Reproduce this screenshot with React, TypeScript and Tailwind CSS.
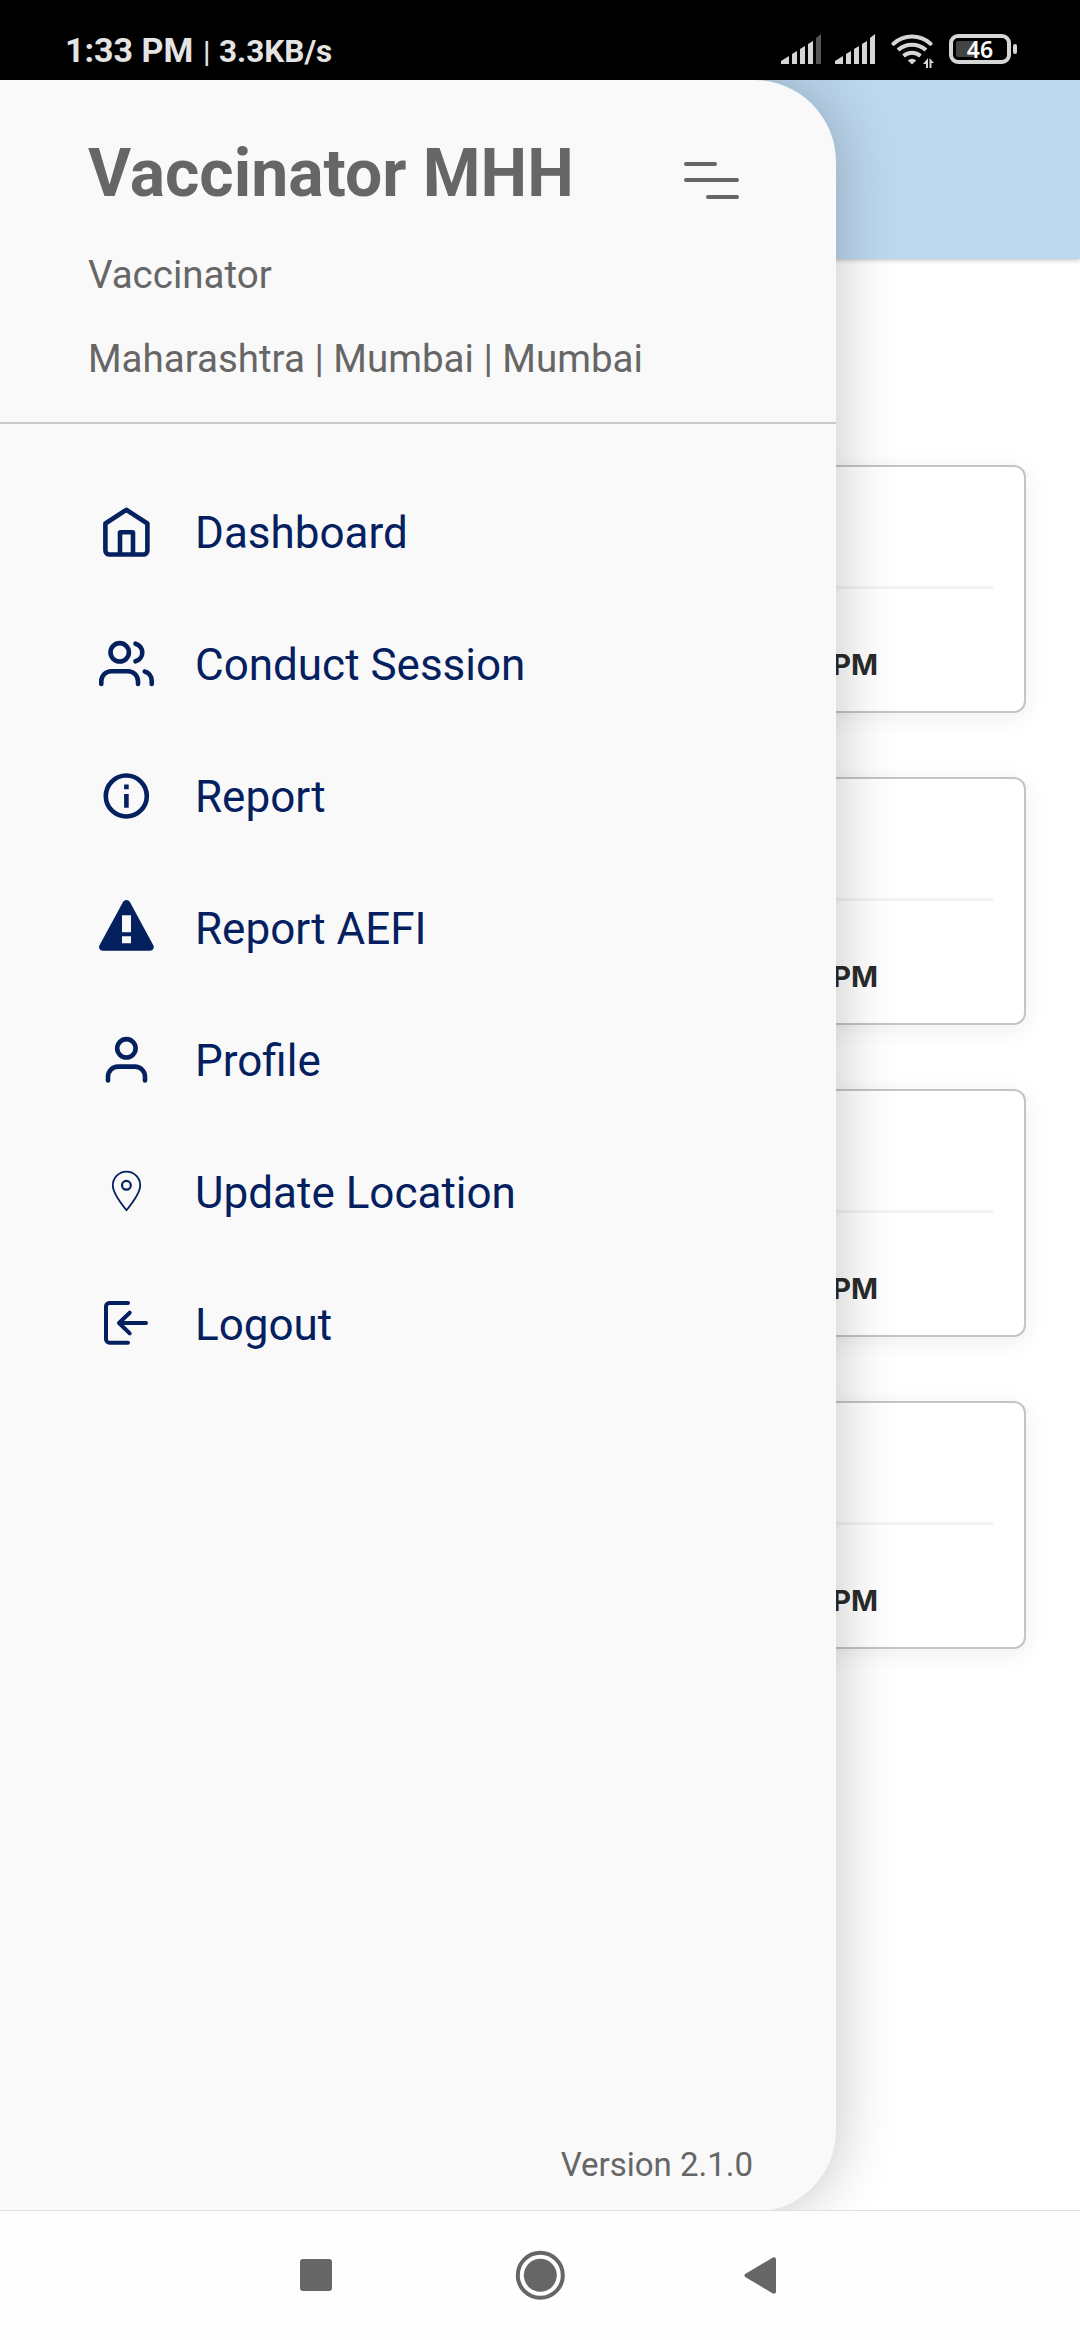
import React from 'react';

interface MenuItem {
  label: string;
  icon: React.ReactNode;
}

const menuItems: MenuItem[] = [
  {
    label: 'Dashboard',
    icon: (
      <>
        <path d="M9.4 21.5 30.3 7.8 51.4 21.5V48.5a4 4 0 0 1-4 4H13.4a4 4 0 0 1-4-4z" />
        <path d="M24 52V30.8a.5.5 0 0 1 .5-.5H36.5a.5.5 0 0 1 .5.5V52" />
      </>
    ),
  },
  {
    label: 'Conduct Session',
    icon: (
      <>
        <circle cx="23.7" cy="18.3" r="9.2" />
        <path d="M5.3 50V47.3a10 10 0 0 1 10-10H32a10 10 0 0 1 10 10V50" />
        <path d="M39.5 9.7c4 1.2 6.8 4.7 6.8 8.8s-2.8 7.6-6.8 8.8" />
        <path d="M48.7 37.5c4.2 1.2 7 4.8 7 9.2V50" />
      </>
    ),
  },
  {
    label: 'Report',
    icon: (
      <>
        <circle cx="30.3" cy="30" r="20.5" />
        <path strokeLinecap="butt" d="M30.4 18.5v4.7M30.4 28v13.7" />
      </>
    ),
  },
  {
    label: 'Report AEFI',
    icon: (
      <path
        fill="currentColor"
        stroke="none"
        fillRule="evenodd"
        d="M27 3.9a4 4 0 0 1 6.9 0L57.3 47.3a3.7 3.7 0 0 1-3.3 5.5H6.8a3.7 3.7 0 0 1-3.3-5.5zM26 17.3V34.2h9V17.3zM26 38.3V45.3h9V38.3z"
      />
    ),
  },
  {
    label: 'Profile',
    icon: (
      <>
        <circle cx="30.4" cy="18.3" r="9.2" />
        <path d="M12 50.4V46.6a10 10 0 0 1 10-10H39a10 10 0 0 1 10 10V50.4" />
      </>
    ),
  },
  {
    label: 'Update Location',
    icon: (
      <>
        <path strokeWidth="1.8" d="M30.5 48.2C22.5 38.5 16.8 30.5 16.8 23.3a13.7 13.7 0 0 1 27.4 0C44.2 30.5 38.5 38.5 30.5 48.2z" />
        <circle strokeWidth="2.2" cx="30.4" cy="23.3" r="4.4" />
      </>
    ),
  },
  {
    label: 'Logout',
    icon: (
      <>
        <path strokeWidth="4" d="M32 9H13.500a3.500 3.500 0 0 0-3.500 3.500V45.200a3.500 3.500 0 0 0 3.500 3.500H32" />
        <path strokeWidth="4" d="M50 29H23.500M33.700 18.700 23 29l10.700 10.400" />
      </>
    ),
  },
];

const cards = [1, 2, 3, 4];

const SignalBars = ({ weak }: { weak?: boolean }) => (
  <svg className="h-[30px] w-[42px]" viewBox="0 0 42 30" fill="#d6d6d6">
    <path d="M0 30v-3l8-5v8zM11 30V20l5-3v13zM19 30V15l5-3v18zM27 30V10l5-3v23z" />
    <path d="M35 30V4l5-4v30z" fill={weak ? '#555' : '#d6d6d6'} />
  </svg>
);

const StatusBar = () => (
  <div className="flex h-20 shrink-0 bg-black text-[#e4e4e4]">
    <div className="flex items-baseline pl-[65px] pt-[30px] font-bold">
      <span className="w-[138px] text-[34px] leading-10">1:33 PM</span>
      <span className="w-4 text-[30px] font-medium leading-10">|</span>
      <span className="text-[31.5px] leading-10">3.3KB/s</span>
    </div>
    <div className="ml-auto flex pr-[63px] pt-[34px]">
      <SignalBars weak />
      <div className="ml-3">
        <SignalBars />
      </div>
      <svg className="ml-[14px] h-[34px] w-[43px]" viewBox="0 0 43 34" fill="none" stroke="#d6d6d6" strokeWidth="4">
        <path strokeLinecap="round" d="M2.500 9.700a27.500 27.500 0 0 1 37 0" />
        <path d="M7 16a21 21 0 0 1 28 0M12.500 22a13 13 0 0 1 17 0" />
        <path d="M21 30.500l-4.200-4a6.200 6.200 0 0 1 8.400 0z" fill="#d6d6d6" stroke="none" />
        <path d="M37 24v10h-2v-4h-3zM38.500 34V24l4.500 5h-2.500v5z" fill="#d6d6d6" stroke="none" />
      </svg>
      <div className="relative ml-[15px] flex h-[30px] w-[62px] items-center justify-center rounded-[9px] border-4 border-[#d6d6d6]">
        <div className="absolute left-[3px] top-[3px] h-4 w-5 rounded-[2px] bg-[#444]" />
        <span className="relative font-['Noto_Sans'] text-[23px] font-semibold leading-none text-white">46</span>
      </div>
      <div className="ml-0.5 mt-[10px] h-2.5 w-1 rounded-[2px] bg-[#d6d6d6]" />
    </div>
  </div>
);

const SessionCard = () => (
  <div className="flex h-[248px] w-[972px] flex-col rounded-xl border-2 border-[#c4c4c4] bg-white pr-[31px] shadow-[0_4px_22px_rgba(60,70,110,0.09)]">
    <div className="h-[122px] border-b-[3px] border-[#f2f2f2]" />
    <div className="flex justify-end pr-[115px] pt-[56px] font-['Inter'] text-[29px] font-bold leading-10 text-[#2b2b2b]">
      PM
    </div>
  </div>
);

const Drawer = () => (
  <aside className="absolute left-0 top-0 flex h-[2132px] w-[836px] flex-col rounded-r-[82px] bg-[#f9f9f9] shadow-[0_0_60px_rgba(0,0,0,0.24)]">
    {/* Header */}
    <div className="h-[344px] border-b-2 border-[#c8c8c8] pl-[88px] text-[#666]">
      <div className="flex pt-[54px]">
        <h1 className="w-[596px] text-[66px] font-bold leading-[80px]">Vaccinator MHH</h1>
        <svg className="mt-6 h-[44px] w-[56px]" viewBox="0 0 56 44" fill="none" stroke="#666" strokeWidth="4" strokeLinecap="round">
          <path d="M2 6h29M2 22h51M24 39h29" />
        </svg>
      </div>
      <p className="mt-9 text-[38.5px] leading-[50px]">Vaccinator</p>
      <p className="mt-[34px] text-[38.5px] leading-[50px]">Maharashtra | Mumbai | Mumbai</p>
    </div>

    {/* Menu */}
    <nav className="pt-[42px] text-[#04205f]">
      {menuItems.map((item) => (
        <a key={item.label} className="flex h-[132px] items-center pl-24">
          <svg
            className="h-[60px] w-[60px]"
            viewBox="0 0 60 60"
            fill="none"
            stroke="currentColor"
            strokeWidth="4.6"
            strokeLinecap="round"
            strokeLinejoin="round"
          >
            {item.icon}
          </svg>
          <span className="ml-[39px] pt-0.5 text-[44px] leading-[60px]">{item.label}</span>
        </a>
      ))}
    </nav>

    <p className="mt-auto pb-[27px] pr-[83px] text-right text-[33px] leading-10 text-[#666]">Version 2.1.0</p>
  </aside>
);

const NavBar = () => (
  <div className="flex h-[130px] shrink-0 border-t border-[#e0e0e0] bg-[#fefefe] pl-[300px]">
    <div className="mt-12 h-8 w-8 rounded-[3px] bg-[#666]" />
    <svg className="ml-[183px] mt-[39px] h-[50px] w-[50px]" viewBox="0 0 50 50">
      <circle cx="25.3" cy="25.3" r="22.5" fill="none" stroke="#666" strokeWidth="4" />
      <circle cx="25.3" cy="25.3" r="16.5" fill="#666" />
    </svg>
    <svg className="ml-[179px] mt-[46px] h-[37px] w-8" viewBox="0 0 32 37" fill="#666">
      <path d="M1.2 17 28.5.8c1.6-1 3.500-.3 3.500 1.7v32c0 2-1.900 2.700-3.500 1.700L1.200 20a1.800 1.800 0 0 1 0-3z" />
    </svg>
  </div>
);

const App: React.FC = () => {
  return (
    <div className="flex h-[2340px] w-[1080px] flex-col overflow-hidden bg-white font-['Roboto',sans-serif]">
      <StatusBar />
      <main className="relative flex-1 overflow-hidden bg-white">
        <div className="h-[179px] bg-[#bcd7ee] shadow-[0_1px_5px_rgba(0,0,0,0.25)]" />
        <div className="flex flex-col gap-16 pl-[54px] pt-[206px]">
          {cards.map((card) => (
            <SessionCard key={card} />
          ))}
        </div>
        <Drawer />
      </main>
      <NavBar />
    </div>
  );
};

export default App;
